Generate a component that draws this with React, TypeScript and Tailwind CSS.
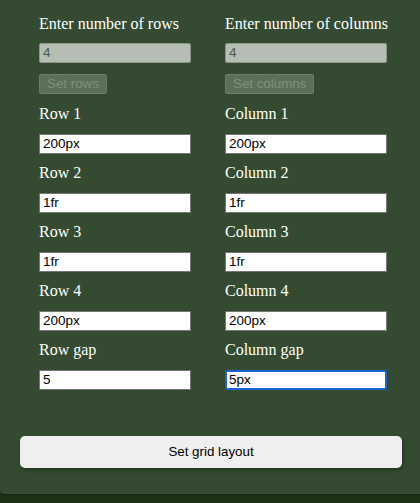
import React from "react";

const serif = { fontFamily: '"Liberation Serif", "Times New Roman", serif' };

function Label({ children, className = "" }: { children: React.ReactNode; className?: string }) {
  return (
    <div
      className={`h-[18px] text-[16px] leading-[18px] text-white whitespace-nowrap ${className}`}
      style={serif}
    >
      {children}
    </div>
  );
}

function TextInput({ value, focused = false }: { value: string; focused?: boolean }) {
  return (
    <input
      defaultValue={value}
      className={`mt-[11px] block h-[20px] w-full bg-white text-[13.5px] text-black outline-none font-['Liberation_Sans',Arial,sans-serif] ${
        focused
          ? "border-2 border-[#1a63d4] rounded-[2px] px-[2px]"
          : "border border-[#767676] px-[3px]"
      }`}
    />
  );
}

function Column({
  title,
  btn,
  name,
  values,
  gapLabel,
  gapValue,
  width,
  focusGap,
}: {
  title: string;
  btn: string;
  name: string;
  values: string[];
  gapLabel: string;
  gapValue: string;
  width: string;
  focusGap?: boolean;
}) {
  return (
    <div className={`flex flex-col ${width}`}>
      <Label>{title}</Label>
      <input
        disabled
        defaultValue="4"
        className="mt-[10px] block h-[20px] w-full rounded-[2px] border border-[#8e968c] bg-[#b6bdb4] px-[3px] text-[13.5px] text-[#4f574e] font-['Liberation_Sans',Arial,sans-serif]"
      />
      <button
        disabled
        className="mt-[11px] h-[20px] self-start rounded-[2px] border border-[#6b7d67] bg-[#5c7058] px-[7px] text-[13.33px] leading-[18px] text-[#7f907b] font-['Liberation_Sans',Arial,sans-serif]"
      >
        {btn}
      </button>
      {values.map((v, i) => (
        <div key={i} className={i === 0 ? "mt-[11px]" : "mt-[10px]"}>
          <Label>
            {name} {i + 1}
          </Label>
          <TextInput value={v} />
        </div>
      ))}
      <div className="mt-[10px]">
        <Label>{gapLabel}</Label>
        <TextInput value={gapValue} focused={focusGap} />
      </div>
    </div>
  );
}

export default function App() {
  return (
    <div className="w-[420px] h-[503px] overflow-hidden bg-[#1e3218]">
      <div className="w-[424px] rounded-b-[4px] bg-[#344b31] pb-[26px] pt-[15px] shadow-[0_1px_2px_rgba(0,0,0,0.3)]">
        <div className="flex gap-[34px] pl-[39px]">
          <Column
            title="Enter number of rows"
            btn="Set rows"
            name="Row"
            values={["200px", "1fr", "1fr", "200px"]}
            gapLabel="Row gap"
            gapValue="5"
            width="w-[152px]"
          />
          <Column
            title="Enter number of columns"
            btn="Set columns"
            name="Column"
            values={["200px", "1fr", "1fr", "200px"]}
            gapLabel="Column gap"
            gapValue="5px"
            width="w-[162px]"
            focusGap
          />
        </div>
        <div className="mt-[46px] pl-[20px]">
          <button className="block h-[32px] w-[382px] rounded-[5px] bg-[#efefef] text-[13.33px] text-black shadow-[1px_2px_4px_rgba(0,0,0,0.35)] font-['Liberation_Sans',Arial,sans-serif]">
            Set grid layout
          </button>
        </div>
      </div>
    </div>
  );
}
